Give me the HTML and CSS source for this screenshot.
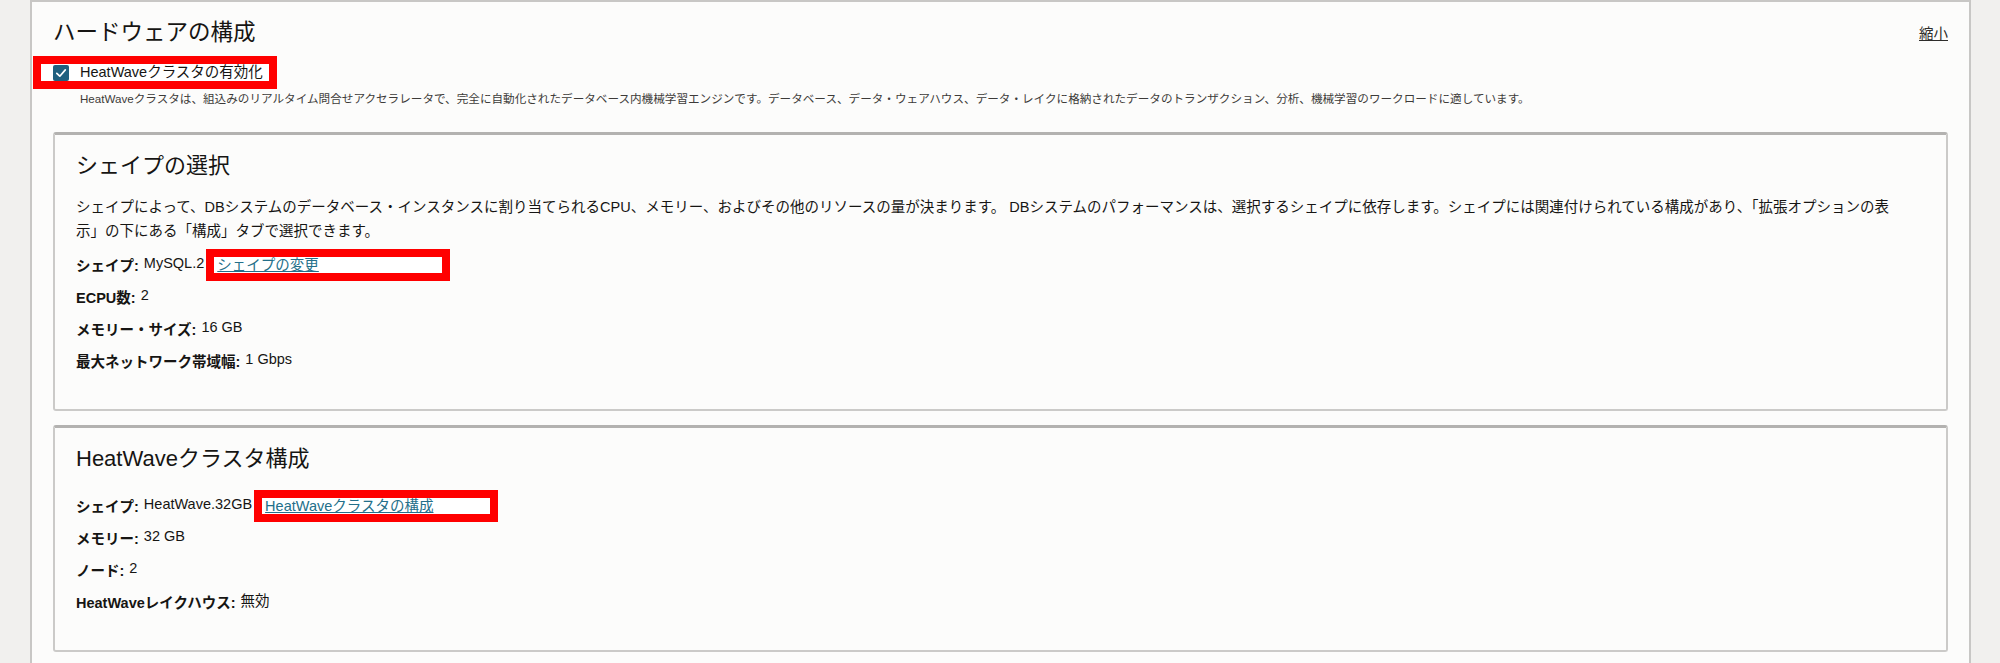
FILE: index.html
```html
<!DOCTYPE html>
<html lang="ja">
<head>
    <meta charset="UTF-8">
    <meta name="viewport" content="width=device-width, initial-scale=1.0">
    <title>ハードウェアの構成</title>
    <link rel="stylesheet" href="styles.css">
</head>
<body>
<div class="panel">
    <div class="panel-head">
        <h2 class="panel-title">ハードウェアの構成</h2>
        <a class="collapse-link" href="#">縮小</a>
    </div>

    <!-- HeatWave toggle -->
    <label class="callout callout-check">
        <span class="checkbox">
            <svg width="16" height="16" viewBox="0 0 16 16"><rect width="16" height="16" rx="2" fill="#20607f"/><path d="M3.8 8.4 L6.8 11.2 L12.3 4.9" fill="none" stroke="#fff" stroke-width="1.7" stroke-linecap="round" stroke-linejoin="round"/></svg>
        </span>
        <span class="check-label">HeatWaveクラスタの有効化</span>
    </label>
    <p class="check-help">HeatWaveクラスタは、組込みのリアルタイム問合せアクセラレータで、完全に自動化されたデータベース内機械学習エンジンです。データベース、データ・ウェアハウス、データ・レイクに格納されたデータのトランザクション、分析、機械学習のワークロードに適しています。</p>

    <!-- Shape -->
    <section class="card">
        <h3 class="card-title">シェイプの選択</h3>
        <p class="card-text">シェイプによって、DBシステムのデータベース・インスタンスに割り当てられるCPU、メモリー、およびその他のリソースの量が決まります。 DBシステムのパフォーマンスは、選択するシェイプに依存します。シェイプには関連付けられている構成があり、「拡張オプションの表<br>示」の下にある「構成」タブで選択できます。</p>
        <div class="row">
            <span class="row-label">シェイプ:</span>
            <span class="row-value">MySQL.2</span>
            <span class="callout callout-link"><a href="#">シェイプの変更</a></span>
        </div>
        <div class="row">
            <span class="row-label">ECPU数:</span>
            <span class="row-value">2</span>
        </div>
        <div class="row">
            <span class="row-label">メモリー・サイズ:</span>
            <span class="row-value">16 GB</span>
        </div>
        <div class="row">
            <span class="row-label">最大ネットワーク帯域幅:</span>
            <span class="row-value">1 Gbps</span>
        </div>
    </section>

    <!-- HeatWave cluster -->
    <section class="card">
        <h3 class="card-title">HeatWaveクラスタ構成</h3>
        <div class="row">
            <span class="row-label">シェイプ:</span>
            <span class="row-value">HeatWave.32GB</span>
            <span class="callout callout-link"><a href="#">HeatWaveクラスタの構成</a></span>
        </div>
        <div class="row">
            <span class="row-label">メモリー:</span>
            <span class="row-value">32 GB</span>
        </div>
        <div class="row">
            <span class="row-label">ノード:</span>
            <span class="row-value">2</span>
        </div>
        <div class="row">
            <span class="row-label">HeatWaveレイクハウス:</span>
            <span class="row-value">無効</span>
        </div>
    </section>
</div>
</body>
</html>
```

FILE: styles.css
```css
:root {
    --page: #f1f0ee;
    --surface: #fcfcfb;
    --text: #161513;
    --muted: #3d3b39;
    --border: #cbcac8;
    --border-strong: #b3b2b0;
    --link: #246f8a;
    --mark: #ff0000;
}

html, body {
    height: 100%;
    overflow: hidden;
}

body {
    margin: 0;
    background: var(--page);
    color: var(--text);
    font-family: "Liberation Sans", "Noto Sans CJK JP", sans-serif;
    font-size: 14.5px;
}

.panel {
    box-sizing: border-box;
    min-height: 100%;
    margin: 0 29px 0 30px;
    padding: 0 21px;
    background: var(--surface);
    border: 2px solid #c8c7c5;
    border-bottom: none;
}

.panel-head {
    display: flex;
    justify-content: space-between;
    align-items: center;
    padding-top: 16px;
    height: 30px;
}

.panel-title {
    margin: 0;
    font-size: 22.5px;
    font-weight: normal;
    line-height: 30px;
}

.collapse-link {
    margin-top: -1px;
    color: #2e2d2b;
    font-size: 14.5px;
    text-decoration: underline;
}

/* red annotation boxes */
.callout {
    box-sizing: border-box;
    width: 244px;
    background: #fff;
    border: 8px solid var(--mark);
}

.callout-check {
    display: flex;
    align-items: center;
    gap: 11px;
    height: 33px;
    margin: 8px 0 0 -20px;
    padding-left: 12px;
}

.checkbox {
    display: flex;
    width: 16px;
    height: 16px;
}

.check-label {
    font-size: 14.5px;
    line-height: 17px;
}

.check-help {
    margin: 2px 0 0 27px;
    font-size: 11.6px;
    line-height: 16px;
    color: var(--muted);
}

.card {
    margin-top: 25px;
    padding: 16px 21px 38px;
    background: var(--surface);
    border: 2px solid var(--border);
    border-top: 3px solid var(--border-strong);
    border-radius: 3px;
}

.card + .card {
    margin-top: 14px;
}

.card-title {
    margin: 0;
    font-size: 22px;
    font-weight: normal;
    line-height: 30px;
}

.card-text {
    margin: 14px 0 0;
    line-height: 24px;
}

.row {
    display: flex;
    align-items: center;
    height: 21px;
    margin-top: 11px;
}

.card-title + .row {
    margin-top: 21px;
}

.row-label {
    font-weight: bold;
}

.row-value {
    margin: 0 0 4px 5px;
    font-size: 14.5px;
}

.callout-link {
    display: flex;
    align-items: center;
    flex-shrink: 0;
    height: 32px;
    margin-left: 2px;
    padding-left: 3px;
}

.callout-link a {
    color: var(--link);
    line-height: 16px;
    text-decoration: underline;
}
```
